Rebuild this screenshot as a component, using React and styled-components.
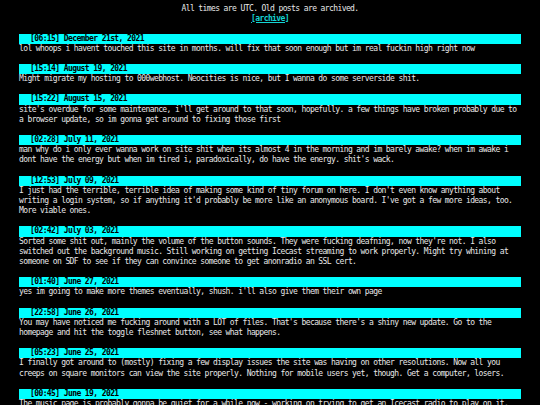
import React from "react";
import styled, { createGlobalStyle } from "styled-components";

const posts = [
  {
    time: "06:15",
    date: "December 21st, 2021",
    text: "lol whoops i havent touched this site in months. will fix that soon enough but im real fuckin high right now",
  },
  {
    time: "15:14",
    date: "August 19, 2021",
    text: "Might migrate my hosting to 000webhost. Neocities is nice, but I wanna do some serverside shit.",
  },
  {
    time: "15:22",
    date: "August 15, 2021",
    text: "site's overdue for some maintenance, i'll get around to that soon, hopefully. a few things have broken probably due to a browser update, so im gonna get around to fixing those first",
  },
  {
    time: "02:28",
    date: "July 11, 2021",
    text: "man why do i only ever wanna work on site shit when its almost 4 in the morning and im barely awake? when im awake i dont have the energy but when im tired i, paradoxically, do have the energy. shit's wack.",
  },
  {
    time: "12:53",
    date: "July 09, 2021",
    text: "I just had the terrible, terrible idea of making some kind of tiny forum on here. I don't even know anything about writing a login system, so if anything it'd probably be more like an anonymous board. I've got a few more ideas, too. More viable ones.",
  },
  {
    time: "02:42",
    date: "July 03, 2021",
    text: "Sorted some shit out, mainly the volume of the button sounds. They were fucking deafning, now they're not. I also switched out the background music. Still working on getting Icecast streaming to work properly. Might try whining at someone on SDF to see if they can convince someone to get anonradio an SSL cert.",
  },
  {
    time: "01:40",
    date: "June 27, 2021",
    text: "yes im going to make more themes eventually, shush. i'll also give them their own page",
  },
  {
    time: "22:58",
    date: "June 26, 2021",
    text: "You may have noticed me fucking around with a LOT of files. That's because there's a shiny new update. Go to the homepage and hit the toggle fleshnet button, see what happens.",
  },
  {
    time: "05:23",
    date: "June 25, 2021",
    text: "I finally got around to (mostly) fixing a few display issues the site was having on other resolutions. Now all you creeps on square monitors can view the site properly. Nothing for mobile users yet, though. Get a computer, losers.",
  },
  {
    time: "00:45",
    date: "June 19, 2021",
    text: "The music page is probably gonna be quiet for a while now - working on trying to get an Icecast radio to play on it. Check back later.",
  },
];

const GlobalStyle = createGlobalStyle`
  html, body {
    margin: 0;
    background: #000;
  }
  body {
    font-family: "DejaVu Sans Mono", "Liberation Mono", monospace;
    font-size: 8px;
    letter-spacing: -0.6px;
    color: #e8e8e8;
    overflow: hidden;
  }
`;

const Page = styled.div`
  padding: 4px 19px 0;
`;

const Notice = styled.div`
  text-align: center;
  line-height: 9.5px;
  margin-bottom: 10.5px;
`;

const ArchiveLink = styled.a`
  color: #14d4d4;
  font-weight: bold;
  text-decoration: underline;
`;

const Post = styled.div`
  margin-bottom: 10.15px;
`;

const PostHeader = styled.div`
  background: #00ffff;
  color: #000;
  font-weight: bold;
  line-height: 10.15px;
  padding-left: 11px;
`;

const PostBody = styled.div`
  line-height: 10.15px;
  font-variant-ligatures: none;
`;

export default function App() {
  return (
    <>
      <GlobalStyle />
      <Page>
        <Notice>
          <div>All times are UTC. Old posts are archived.</div>
          <div>
            <ArchiveLink href="#">[archive]</ArchiveLink>
          </div>
        </Notice>
        {posts.map((p) => (
          <Post key={p.time + p.date}>
            <PostHeader>
              [{p.time}] {p.date}
            </PostHeader>
            <PostBody>{p.text}</PostBody>
          </Post>
        ))}
      </Page>
    </>
  );
}
